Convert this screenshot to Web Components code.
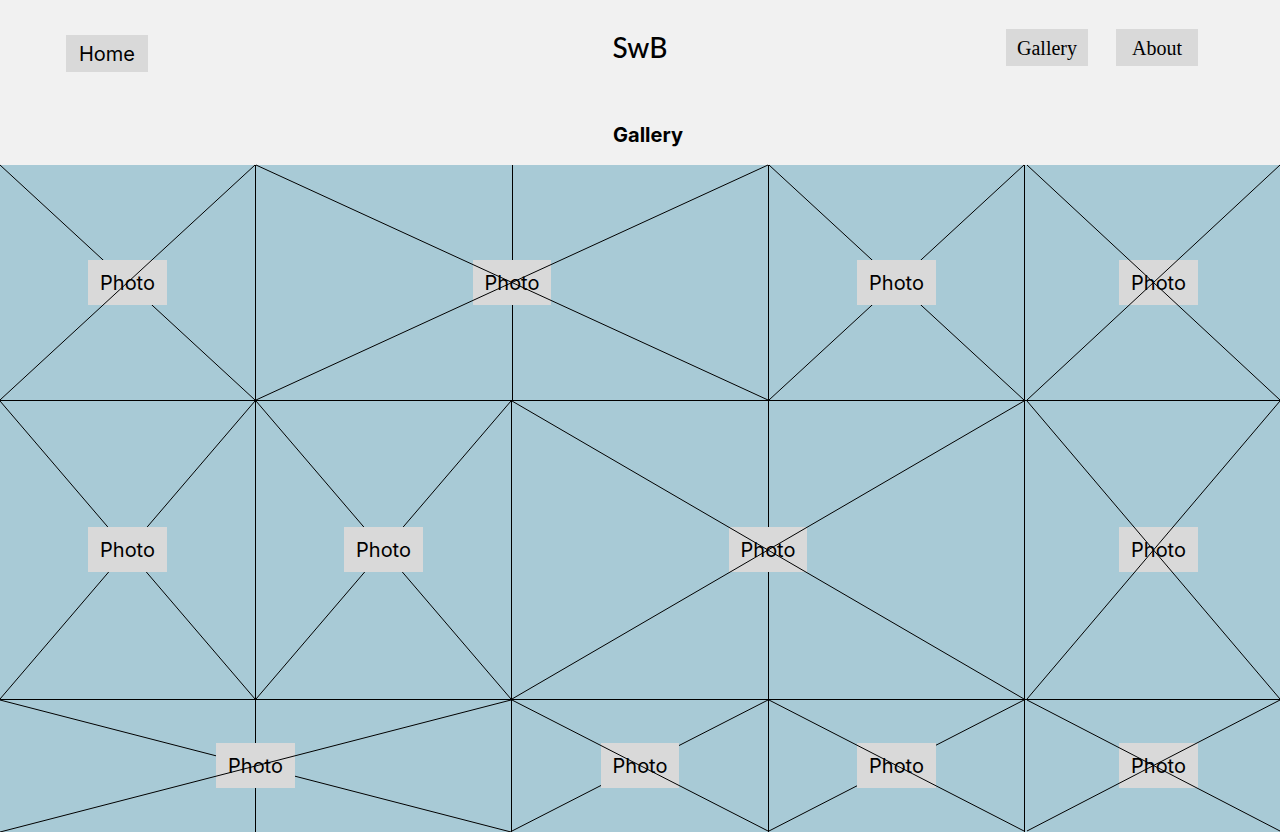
<!DOCTYPE html>
<html lang="en">
<head>
<meta charset="utf-8">
<meta name="viewport" content="width=device-width, initial-scale=1">
<title>SwB – Gallery</title>
<style>
  body { margin: 0; background: #f1f1f1; color: #000; font-family: Inter, "Liberation Sans", sans-serif; font-size: 20px; line-height: 24px; }
</style>
</head>
<body>
<site-header>
  <nav-link slot="home" href="#home">Home</nav-link>
  <span slot="logo">SwB</span>
  <nav-link slot="nav" serif href="#gallery">Gallery</nav-link>
  <nav-link slot="nav" serif href="#about">About</nav-link>
  <span slot="title">Gallery</span>
</site-header>
<photo-gallery>
  <photo-tile over="rise">Photo</photo-tile>
  <photo-tile wide over="rise fall">Photo</photo-tile>
  <photo-tile>Photo</photo-tile>
  <photo-tile edge over="rise fall">Photo</photo-tile>
  <photo-tile>Photo</photo-tile>
  <photo-tile>Photo</photo-tile>
  <photo-tile wide over="rise fall">Photo</photo-tile>
  <photo-tile edge over="rise fall">Photo</photo-tile>
  <photo-tile last wide over="rise">Photo</photo-tile>
  <photo-tile last over="fall">Photo</photo-tile>
  <photo-tile last over="fall">Photo</photo-tile>
  <photo-tile last edge over="rise fall">Photo</photo-tile>
</photo-gallery>

<script>
  class NavLink extends HTMLElement {
    constructor() {
      super();
      this.attachShadow({ mode: "open" }).innerHTML = `
        <style>
          :host { display: block; }
          a { display: flex; align-items: center; justify-content: center; box-sizing: border-box;
              min-width: 82px; height: 37px; padding: 0 8px; background: #d9d9d9; color: inherit; text-decoration: none; }
          :host([serif]) a { font-family: "Liberation Serif", serif; }
        </style>
        <a><slot></slot></a>`;
      this.shadowRoot.querySelector("a").href = this.getAttribute("href") || "#";
    }
  }

  class SiteHeader extends HTMLElement {
    constructor() {
      super();
      this.attachShadow({ mode: "open" }).innerHTML = `
        <style>
          :host { display: block; }
          header { padding: 29px 0 18px; }
          .bar { display: grid; grid-template-columns: 1fr auto 1fr; align-items: start; margin-bottom: 51px; }
          .home { padding: 6px 0 0 66px; justify-self: start; }
          .logo { font-family: Lato, sans-serif; font-size: 28px; line-height: 37px; font-weight: 500; }
          nav { display: flex; gap: 28px; justify-self: end; padding-right: 82px; }
          h1 { margin: 0; padding-left: 16px; font-size: 20px; line-height: 24px; font-weight: 700; text-align: center; }
        </style>
        <header>
          <div class="bar">
            <div class="home"><slot name="home"></slot></div>
            <div class="logo"><slot name="logo"></slot></div>
            <nav><slot name="nav"></slot></nav>
          </div>
          <h1><slot name="title"></slot></h1>
        </header>`;
    }
  }

  class PhotoGallery extends HTMLElement {
    constructor() {
      super();
      this.attachShadow({ mode: "open" }).innerHTML = `
        <style>
          :host { display: block; }
          main { display: grid; background: #a8cad6;
                 grid-template-columns: 256fr 256fr 257fr 256fr 255fr;
                 grid-template-rows: 236px 299px 132px; }
        </style>
        <main><slot></slot></main>`;
    }
  }

  /* A placeholder tile; "over" names the diagonals drawn in front of its label. */
  class PhotoTile extends HTMLElement {
    constructor() {
      super();
      const over = (this.getAttribute("over") || "").split(" ");
      const diagonals = {
        fall: '<line x1="0" y1="0" x2="100%" y2="100%"/>',
        rise: '<line x1="0" y1="100%" x2="100%" y2="0"/>'
      };
      const pick = front => Object.keys(diagonals)
        .filter(name => over.includes(name) === front)
        .map(name => diagonals[name]).join("");
      const middle = this.hasAttribute("wide")
        ? '<line x1="50%" y1="0" x2="50%" y2="100%" shape-rendering="crispEdges"/>' : "";
      this.attachShadow({ mode: "open" }).innerHTML = `
        <style>
          :host { display: flex; align-items: center; justify-content: center; position: relative;
                  box-sizing: border-box; padding-bottom: 1px; border: 0 solid #000; border-width: 0 1px 1px 0; }
          :host([wide]) { grid-column: span 2; }
          :host([edge]) { border-right-width: 0; padding-left: 12px; }
          :host([last]) { border-bottom-width: 0; }
          svg { position: absolute; top: 0; left: 0; width: 100%; height: 100%; overflow: visible;
                stroke: #000; stroke-width: 1; pointer-events: none; }
          :host([edge]) svg { left: 2px; width: calc(100% - 2px); }
          :host([last]:not([wide])) svg { height: calc(100% - 1px); }
          span { position: relative; padding: 11px 12px 10px; background: #d9d9d9; }
        </style>
        <svg aria-hidden="true">${middle}${pick(false)}</svg>
        <span><slot></slot></span>
        <svg aria-hidden="true">${pick(true)}</svg>`;
    }
  }

  customElements.define("nav-link", NavLink);
  customElements.define("site-header", SiteHeader);
  customElements.define("photo-gallery", PhotoGallery);
  customElements.define("photo-tile", PhotoTile);
</script>
</body>
</html>
